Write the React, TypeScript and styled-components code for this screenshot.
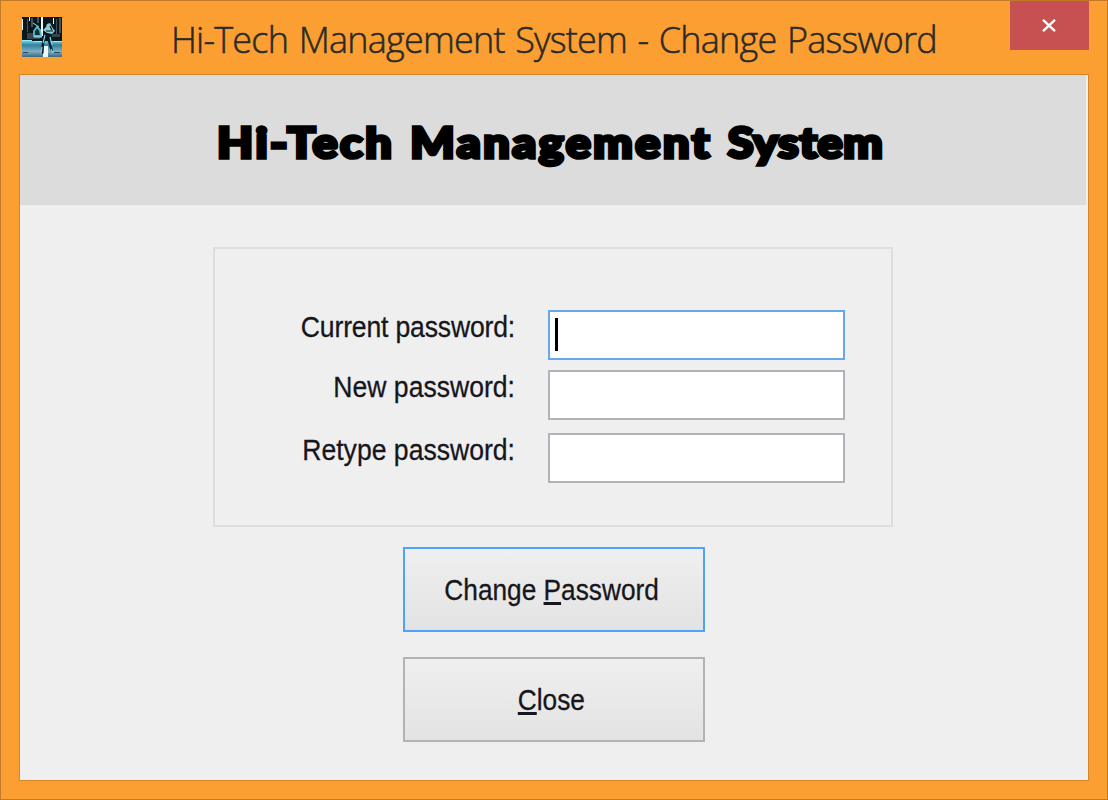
import React from 'react';
import styled, { createGlobalStyle } from 'styled-components';

const Global = createGlobalStyle`
  * { box-sizing: border-box; }
  body { margin: 0; overflow: hidden; }
`;

const Window = styled.div`
  display: flex;
  flex-direction: column;
  width: 1108px;
  height: 800px;
  padding: 0 18px 18px;
  border: 1px solid #c27a28;
  background: #fc9f32;
`;

const TitleBar = styled.header`
  display: flex;
  height: 73px;
  flex: none;
`;

const AppIcon = styled.svg`
  width: 40px;
  height: 40px;
  margin: 16px 0 0 3px;
  flex: none;
`;

const TitleText = styled.h1`
  flex: 1;
  margin: 16px 0 0 109px;
  font: 300 36px/46px 'Open Sans', sans-serif;
  letter-spacing: -0.78px;
  word-spacing: 1.9px;
  white-space: nowrap;
  color: #2a2a26;
  -webkit-text-stroke: 0.5px #2a2a26;
`;

const CloseBox = styled.button`
  display: flex;
  align-items: center;
  justify-content: center;
  width: 79px;
  height: 49px;
  padding: 0 1px 1px 0;
  border: 0;
  background: #c75050;
`;

const Client = styled.main`
  display: flex;
  flex-direction: column;
  align-items: center;
  height: 707px;
  border: 1px solid #d58629;
  background: #efefef;
`;

const Banner = styled.div`
  display: flex;
  align-items: flex-start;
  width: 1066px;
  height: 130px;
  margin-right: 2px;
  padding: 34px 0 0 197px;
  background: #dcdcdc;
`;

const BannerText = styled.h2`
  margin: 0;
  font: 900 42px/66px Lato, sans-serif;
  letter-spacing: 2.3px;
  word-spacing: 2px;
  white-space: nowrap;
  color: #000;
  -webkit-text-stroke: 3.5px #000;
  transform: scaleX(1.113);
  transform-origin: left;
`;

const TightWord = styled.span`
  letter-spacing: 0.6px;
`;

const Group = styled.fieldset`
  display: flex;
  flex-direction: column;
  width: 680px;
  height: 280px;
  margin: 42px 3px 20px 0;
  padding: 61px 0 0;
  border: 2px solid #dedede;
`;

const Field = styled.label<{ $gap: number }>`
  display: flex;
  height: 50px;
  margin-bottom: ${(p) => p.$gap}px;
`;

const Caption = styled.span<{ $tight?: boolean }>`
  width: 300px;
  margin-right: 33px;
  font: 30px/34px 'Liberation Sans', sans-serif;
  letter-spacing: ${(p) => (p.$tight ? '-0.2px' : '0')};
  text-align: right;
  white-space: nowrap;
  color: #16161c;
  -webkit-text-stroke: 0.3px #16161c;
  transform: scaleX(0.886);
  transform-origin: right;
`;

const Input = styled.span<{ $focused?: boolean }>`
  width: 297px;
  height: 50px;
  padding: 6px 5px;
  border: 2px solid ${(p) => (p.$focused ? '#67a8ea' : '#b2b3b8')};
  background: #fff;
`;

const Caret = styled.i`
  display: block;
  width: 3px;
  height: 33px;
  background: #000;
`;

const Button = styled.button<{ $primary?: boolean }>`
  display: flex;
  align-items: center;
  justify-content: center;
  width: 302px;
  height: 85px;
  margin-bottom: 25px;
  padding: 0 5px 0 0;
  border: 2px solid ${(p) => (p.$primary ? '#4da3fb' : '#b3b3b3')};
  background: linear-gradient(#efefef, #e3e3e3);
  font: 30px/34px 'Liberation Sans', sans-serif;
  color: #16161c;
  -webkit-text-stroke: 0.3px #16161c;
`;

const ButtonText = styled.span`
  white-space: nowrap;
  transform: scaleX(0.875);
`;

const Mnemonic = styled.span`
  text-decoration: underline;
  text-decoration-thickness: 3px;
  text-underline-offset: 2px;
`;

const fields = [
  { label: 'Current password:', gap: 10, focused: true },
  { label: 'New password:', gap: 13 },
  { label: 'Retype password:', gap: 0 },
];

const FigureIcon = () => (
  <AppIcon viewBox="0 0 40 40">
    <defs>
      <linearGradient id="floor" x1="0" y1="0" x2="0" y2="1">
        <stop offset="0" stopColor="#66d2e8" />
        <stop offset="0.25" stopColor="#34809a" />
        <stop offset="0.65" stopColor="#7badc4" />
        <stop offset="1" stopColor="#3c697d" />
      </linearGradient>
    </defs>
    <g shapeRendering="crispEdges">
      <path d="M0 0h40v40H0z" fill="#0b171d" />
      <path d="M0 24h40v16H0z" fill="url(#floor)" />
      <path d="M5 2h1v13h-1zM9 1h2v9H9zM15 0h2v6h-2zM34 2h1v18h-1zM37 1h2v15h-2z" fill="#40545c" />
      <path d="M5 16h13v6H5zM30 17h8v3h-8z" fill="#34454e" />
      <path d="M0 2h1v11H0zM7 0h1v4H7zM19 0h2v19h-2zM31 1h1v6h-1z" fill="#edfafa" />
      <path d="M0 23h10v1H0zM12 24h8v1h-8zM31 24h9v1h-9z" fill="#94ecf5" />
      <path d="M22 29h4v11h-5v-4h1z" fill="#eef9fc" />
      <path d="M1 35h5v1H1zM32 35h6v1h-6z" fill="#27485a" />
    </g>
    <path d="M12 19v-5l3-4 3 3 1 6z" fill="#12313c" stroke="#58bac9" strokeWidth="1.8" />
    <path d="M11 6l6 4M12 20h8" stroke="#9ce6ec" />
    <path d="M25 7l3-1 2 4 3 4-3 3-5-1-4-3 3-3z" fill="#8fcbd5" />
    <path d="M24 14h7M23 17l7 1M28 9l2 4" stroke="#07161d" strokeWidth="1.2" />
    <path d="M24 16l-3 10-1 11M29 17l-2 7 3 10" fill="none" stroke="#0b202a" strokeWidth="2.4" />
    <path d="M23 18l-2 8M28 20l2 8M20 30l-1 7M29 32l2 4" stroke="#7edce9" strokeWidth="1.1" />
  </AppIcon>
);

export default function App() {
  return (
    <Window>
      <Global />
      <TitleBar>
        <FigureIcon />
        <TitleText>Hi-Tech Management System - Change Password</TitleText>
        <CloseBox aria-label="Close window">
          <svg width="14" height="13" viewBox="0 0 14 13">
            <path d="M1 0.8l12 11.4M13 0.8L1 12.2" stroke="#fff" strokeWidth="2.3" />
          </svg>
        </CloseBox>
      </TitleBar>
      <Client>
        <Banner>
          <BannerText>
            Hi-Tech Management <TightWord>System</TightWord>
          </BannerText>
        </Banner>
        <Group>
          {fields.map((f) => (
            <Field key={f.label} $gap={f.gap}>
              <Caption $tight={f.focused}>{f.label}</Caption>
              <Input $focused={f.focused}>{f.focused && <Caret />}</Input>
            </Field>
          ))}
        </Group>
        <Button $primary>
          <ButtonText>
            Change <Mnemonic>P</Mnemonic>assword
          </ButtonText>
        </Button>
        <Button>
          <ButtonText>
            <Mnemonic>C</Mnemonic>lose
          </ButtonText>
        </Button>
      </Client>
    </Window>
  );
}
